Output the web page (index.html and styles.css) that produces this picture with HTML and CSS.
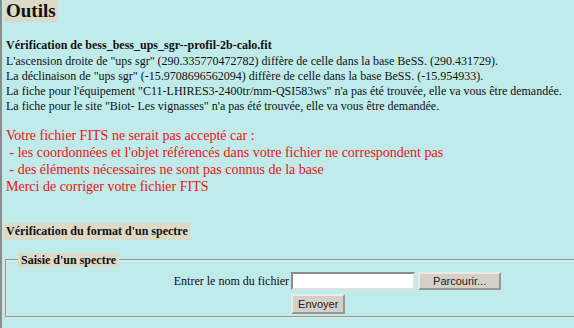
FILE: index.html
```
<!DOCTYPE html>
<html lang="fr">
<head>
    <meta charset="UTF-8">
    <title>Outils</title>
    <link rel="stylesheet" href="styles.css">
</head>
<body>
    <div class="page">
        <h2 class="title">Outils</h2>

        <div class="report">
            <div class="report-title">Vérification de bess_bess_ups_sgr--profil-2b-calo.fit</div>
            <div>L'ascension droite de "ups sgr" (290.335770472782) diffère de celle dans la base BeSS. (290.431729).</div>
            <div>La déclinaison de "ups sgr" (-15.9708696562094) diffère de celle dans la base BeSS. (-15.954933).</div>
            <div>La fiche pour l'équipement "C11-LHIRES3-2400tr/mm-QSI583ws" n'a pas été trouvée, elle va vous être demandée.</div>
            <div>La fiche pour le site "Biot- Les vignasses" n'a pas été trouvée, elle va vous être demandée.</div>
        </div>

        <div class="error">
            <div>Votre fichier FITS ne serait pas accepté car :</div>
            <div>&nbsp;- les coordonnées et l'objet référencés dans votre fichier ne correspondent pas</div>
            <div>&nbsp;- des éléments nécessaires ne sont pas connus de la base</div>
            <div>Merci de corriger votre fichier FITS</div>
        </div>

        <h4 class="section">Vérification du format d'un spectre</h4>

        <form class="upload">
            <fieldset>
                <legend>Saisie d'un spectre</legend>
                <div class="upload-grid">
                    <label for="fichier">Entrer le nom du fichier</label>
                    <div class="file-row">
                        <input type="text" id="fichier" class="file-input">
                        <button type="button" class="btn btn-browse">Parcourir...</button>
                    </div>
                    <span></span>
                    <div>
                        <button type="submit" class="btn btn-send">Envoyer</button>
                    </div>
                </div>
            </fieldset>
        </form>
    </div>
</body>
</html>
```

FILE: styles.css
```
html {
    overflow: hidden;
}

body {
    margin: 0;
    background-color: #c0ebeb;
    border-left: 2px solid #8c8c8c;
    min-height: 328px;
    font-family: "Liberation Serif", "Times New Roman", serif;
    font-size: 12px;
    color: #111;
}

.page {
    width: 666px;
    padding-left: 2px;
}

.title {
    display: inline-block;
    margin: 0;
    padding: 0 2px 0 2px;
    background-color: #dcd9c6;
    font-size: 19px;
    line-height: 22px;
}

.report {
    margin-top: 16px;
    line-height: 15px;
    padding-left: 2px;
}

.report-title {
    font-weight: bold;
    margin-bottom: 1px;
}

.error {
    margin-top: 13px;
    padding-left: 2px;
    color: #f01010;
    font-size: 14px;
    line-height: 17px;
}

.section {
    display: inline-block;
    margin: 28px 0 0;
    padding: 1px 2px;
    background-color: #dcd9c6;
    font-size: 12px;
    line-height: 15px;
}

.upload fieldset {
    margin: 13px 0 0 1px;
    padding: 5px 8px 2px;
    border: 2px groove #e8e8e8;
}

.upload legend {
    padding: 0 3px;
    margin-left: 3px;
    background-color: #dcd9c6;
    font-weight: bold;
    font-size: 12px;
    line-height: 14px;
}

.upload-grid {
    display: grid;
    grid-template-columns: auto auto;
    justify-content: center;
    align-items: center;
    row-gap: 4px;
}

.upload-grid label {
    padding-right: 2px;
}

.file-row {
    display: flex;
    gap: 3px;
}

.file-input {
    width: 118px;
    height: 12px;
    margin: 0;
    padding: 1px;
    border: 2px inset #e0e0e0;
    background: #fff;
}

.btn {
    height: 18px;
    margin: 0;
    border: 2px outset #eeeae2;
    background-color: #d4d0c8;
    font-family: "Liberation Sans", Arial, sans-serif;
    font-size: 11px;
    color: #222;
}

.btn-browse {
    padding: 0 13px;
}

.btn-send {
    height: 20px;
    padding: 0 5px;
}
```
